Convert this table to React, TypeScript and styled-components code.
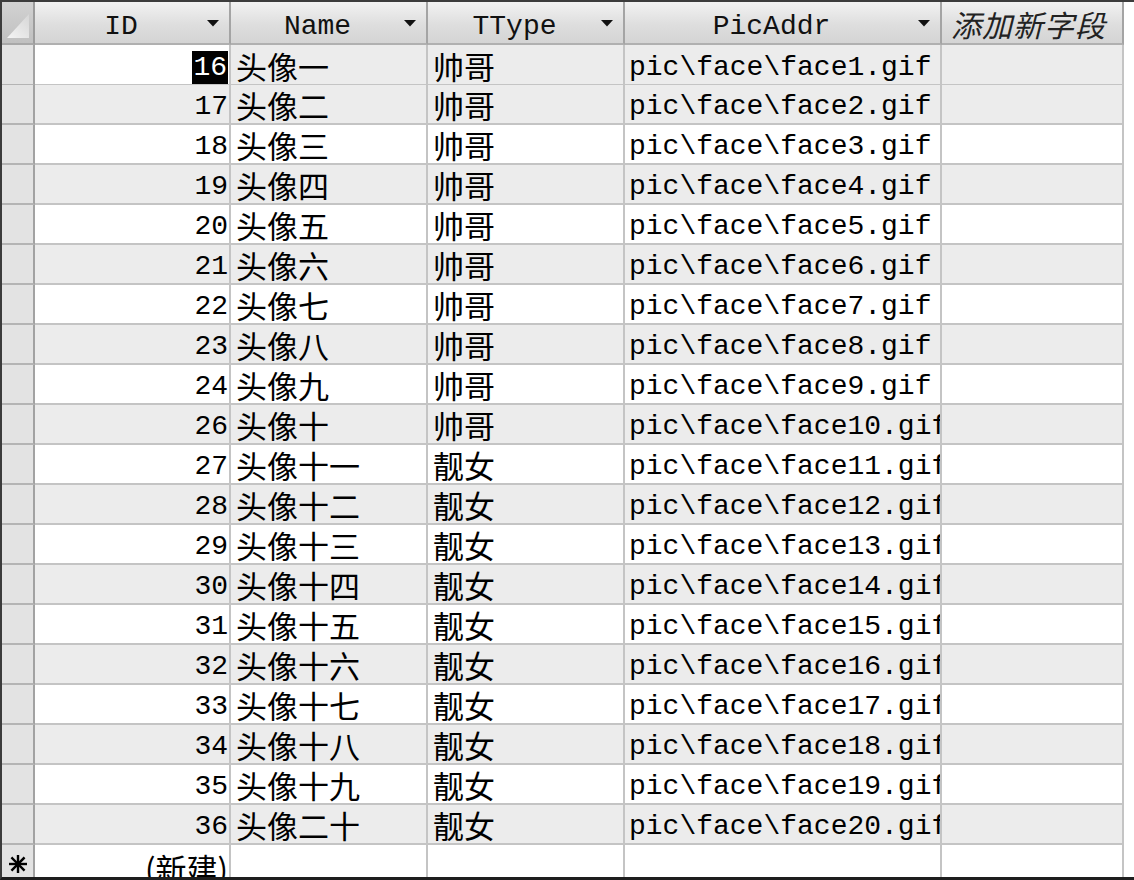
import React from 'react';
import styled, { createGlobalStyle } from 'styled-components';

interface Face {
    id: number,
    name: string,
    type: string,
    pic: string
}

const names = ['一', '二', '三', '四', '五', '六', '七', '八', '九', '十',
    '十一', '十二', '十三', '十四', '十五', '十六', '十七', '十八', '十九', '二十'];
const ids = [16, 17, 18, 19, 20, 21, 22, 23, 24, 26, 27, 28, 29, 30, 31, 32, 33, 34, 35, 36];

const faces: Face[] = ids.map((id, i) => ({
    id,
    name: '头像' + names[i],
    type: i < 10 ? '帅哥' : '靓女',
    pic: 'pic\\face\\face' + (i + 1) + '.gif'
}));

const GlobalStyle = createGlobalStyle`
    html, body {
        margin: 0;
        padding: 0;
        background: #fff;
        overflow: hidden;
    }
`

const COLUMNS = '33px 196px 197px 197px 317px 182px';
const LINE = '#c4c4c4';

const Sheet = styled.div`
    height: 880px;
    box-sizing: border-box;
    border-top: 2px solid #3c3c3c;
    border-left: 2px solid #3c3c3c;
    border-bottom: 3px solid #1e1e1e;
    overflow: hidden;
    background: #fff;
`

const Row = styled.div<{ $header?: boolean }>`
    display: grid;
    grid-template-columns: ${COLUMNS};
    height: ${props => props.$header ? '43px' : '40px'};
`

const Corner = styled.div`
    box-sizing: border-box;
    background: linear-gradient(#d2d2d2, #c0c0c0);
    border-right: 2px solid #9c9c9c;
    border-bottom: 2px solid #a8a8a8;
    display: flex;
    align-items: flex-end;
    justify-content: flex-end;
    padding: 0 4px 5px 0;
`

const HeaderCell = styled.div<{ $plain?: boolean }>`
    box-sizing: border-box;
    display: flex;
    align-items: center;
    padding: ${props => props.$plain ? '2px 10px 0 9px' : '8px 10px 0 0'};
    background: linear-gradient(#f2f2f2, #dedede 55%, #d4d4d4);
    border-right: 2px solid #a4a4a4;
    border-bottom: 2px solid #b0b0b0;
    color: #111;
    line-height: 1;
    font-family: "Liberation Mono", "Noto Sans CJK SC", monospace;
    font-size: 28px;
`

const HeaderLabel = styled.span`
    flex: 1;
    text-align: center;
    white-space: nowrap;
`

const ArrowBox = styled.span`
    display: flex;
    margin-top: -6px;
`

const NewFieldLabel = styled.span`
    font-family: "Noto Sans CJK SC", sans-serif;
    font-size: 30px;
    font-style: italic;
    color: #222;
    white-space: nowrap;
    letter-spacing: 1px;
`

const Selector = styled.div`
    box-sizing: border-box;
    background: #e3e3e3;
    border-right: 2px solid #a2a2a2;
    border-bottom: 2px solid #b4b4b4;
    display: flex;
    align-items: center;
    justify-content: center;
`

const Cell = styled.div<{ $shade?: boolean, $cjk?: boolean, $right?: boolean, $clip?: boolean }>`
    box-sizing: border-box;
    display: flex;
    align-items: center;
    justify-content: ${props => props.$right ? 'flex-end' : 'flex-start'};
    padding: ${props => props.$right ? '6px 1px 0 0' : props.$cjk ? '1px 0 0 5px' : '6px 0 0 4px'};
    background: ${props => props.$shade ? '#ececec' : '#fff'};
    border-right: 2px solid ${LINE};
    border-bottom: 2px solid ${LINE};
    overflow: ${props => props.$clip ? 'hidden' : 'visible'};
    white-space: nowrap;
    color: #000;
    line-height: 1;
    font-family: ${props => props.$cjk ? '"Noto Sans CJK SC", sans-serif' : '"Liberation Mono", "Noto Sans CJK SC", monospace'};
    font-size: ${props => props.$cjk ? '31px' : '28px'};
`

const Selected = styled.span`
    background: #000;
    color: #fff;
    padding: 3px 1px 2px;
`

const DropArrow = () =>
    <ArrowBox>
        <svg width="12" height="7" viewBox="0 0 12 7">
            <path d="M0 0 L12 0 L6 6.5 Z" fill="#111" />
        </svg>
    </ArrowBox>

const CornerMark = () =>
    <svg width="22" height="24" viewBox="0 0 22 24">
        <defs>
            <linearGradient id="cornerFill" x1="0" y1="1" x2="1" y2="0">
                <stop offset="0" stopColor="#f4f4f4" />
                <stop offset="1" stopColor="#d6d6d6" />
            </linearGradient>
        </defs>
        <path d="M0 24 L22 24 L22 0 Z" fill="url(#cornerFill)" />
    </svg>

const NewRowMark = () =>
    <svg width="18" height="18" viewBox="0 0 18 18">
        <g stroke="#000" strokeWidth="2.4" strokeLinecap="square">
            <line x1="9" y1="1" x2="9" y2="17" />
            <line x1="1" y1="9" x2="17" y2="9" />
            <line x1="3.3" y1="3.3" x2="14.7" y2="14.7" />
            <line x1="14.7" y1="3.3" x2="3.3" y2="14.7" />
        </g>
    </svg>

export default function App() {
    return <>
        <GlobalStyle />
        <Sheet>
            <Row $header>
                <Corner><CornerMark /></Corner>
                <HeaderCell><HeaderLabel>ID</HeaderLabel><DropArrow /></HeaderCell>
                <HeaderCell><HeaderLabel>Name</HeaderLabel><DropArrow /></HeaderCell>
                <HeaderCell><HeaderLabel>TType</HeaderLabel><DropArrow /></HeaderCell>
                <HeaderCell><HeaderLabel>PicAddr</HeaderLabel><DropArrow /></HeaderCell>
                <HeaderCell $plain><NewFieldLabel>添加新字段</NewFieldLabel></HeaderCell>
            </Row>
            {faces.map((f, i) => {
                const current = i === 0;
                const shade = current || i % 2 === 1;
                return <Row key={f.id}>
                    <Selector />
                    <Cell $right $shade={shade && !current}>
                        {current ? <Selected>{f.id}</Selected> : f.id}
                    </Cell>
                    <Cell $cjk $shade={shade}>{f.name}</Cell>
                    <Cell $cjk $shade={shade}>{f.type}</Cell>
                    <Cell $clip $shade={shade}>{f.pic}</Cell>
                    <Cell $shade={shade} />
                </Row>
            })}
            <Row>
                <Selector><NewRowMark /></Selector>
                <Cell $right $cjk>(新建)</Cell>
                <Cell />
                <Cell />
                <Cell />
                <Cell />
            </Row>
        </Sheet>
    </>
}
